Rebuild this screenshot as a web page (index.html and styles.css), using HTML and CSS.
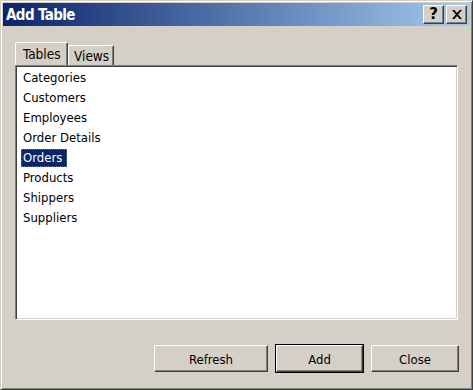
FILE: index.html
```html
<!DOCTYPE html>
<html>
<head>
<meta charset="utf-8">
<link rel="stylesheet" href="styles.css">
</head>
<body>
<div class="window">
  <div class="titlebar">
    <span class="title">Add Table</span>
    <div class="caption-btns">
      <div class="cap help">?</div>
      <div class="cap close">
        <svg width="10" height="9" viewBox="0 0 10 9"><path d="M0 0h2.4l2.6 2.9L7.6 0H10L6.2 4.5 10 9H7.6L5 6.1 2.4 9H0l3.8-4.5z" fill="#000"/></svg>
      </div>
    </div>
  </div>
  <div class="body">
    <div class="tabs">
      <div class="tab active">Tables</div>
      <div class="tab">Views</div>
    </div>
    <div class="listbox">
      <ul class="items">
        <li><span class="item">Categories</span></li>
        <li><span class="item">Customers</span></li>
        <li><span class="item">Employees</span></li>
        <li><span class="item">Order Details</span></li>
        <li><span class="item selected">Orders</span></li>
        <li><span class="item">Products</span></li>
        <li><span class="item">Shippers</span></li>
        <li><span class="item">Suppliers</span></li>
      </ul>
    </div>
    <div class="buttons">
      <div class="btn btn-refresh"><span>Refresh</span></div>
      <div class="btn btn-default btn-add"><span>Add</span></div>
      <div class="btn btn-close"><span>Close</span></div>
    </div>
  </div>
</div>
</body>
</html>
```
FILE: styles.css
```css
* { box-sizing: border-box; }
html, body { margin: 0; padding: 0; background: #d4d0c8; }
body {
  font-family: "DejaVu Sans Condensed", "Liberation Sans", sans-serif;
  font-size: 13px;
  color: #000;
}
.window {
  width: 473px;
  height: 390px;
  background: #d4d0c8;
  border: 1px solid;
  border-color: #d4d0c8 #404040 #404040 #d4d0c8;
  box-shadow: inset 1px 1px 0 #ffffff, inset -1px -1px 0 #808080;
  padding: 2px;
  display: flex;
  flex-direction: column;
}
.titlebar {
  height: 23px;
  flex: none;
  background: linear-gradient(to right, #0a246a, #a6caf0);
  display: flex;
  align-items: center;
  justify-content: space-between;
  padding: 0 3px 0 3px;
}
.title {
  color: #fff;
  font-weight: bold;
  font-size: 15px;
  font-family: "DejaVu Sans Condensed", "Liberation Sans", sans-serif;
  letter-spacing: -0.6px;
}
.caption-btns {
  display: flex;
  gap: 2px;
}
.cap {
  width: 21px;
  height: 19px;
  background: #d4d0c8;
  border: 1px solid;
  border-color: #ffffff #404040 #404040 #ffffff;
  box-shadow: inset -1px -1px 0 #808080;
  display: flex;
  align-items: center;
  justify-content: center;
}
.help {
  font-family: "DejaVu Sans", sans-serif;
  font-weight: bold;
  font-size: 15px;
  line-height: 1;
  padding-bottom: 1px;
}
.body {
  flex: 1;
  display: flex;
  flex-direction: column;
  padding: 16px 12px 15px 12px;
}
.tabs {
  display: flex;
  align-items: flex-end;
  height: 23px;
  flex: none;
}
.tab {
  height: 20px;
  width: 46px;
  padding: 1px 0 0 5px;
  border: 1px solid;
  border-bottom: none;
  border-color: #ffffff #404040 transparent #ffffff;
  box-shadow: inset -1px 0 0 #808080;
  border-radius: 2px 2px 0 0;
  line-height: 18px;
  font-size: 13.5px;
}
.tab.active {
  height: 23px;
  width: 53px;
  padding: 2px 0 0 7px;
  line-height: 19px;
}
.listbox {
  height: 255px;
  flex: none;
  background: #ffffff;
  border: 1px solid;
  border-color: #808080 #ffffff #ffffff #808080;
  box-shadow: inset 1px 1px 0 #404040, inset -1px -1px 0 #d4d0c8;
  padding: 3px 2px 2px 5px;
}
.items {
  list-style: none;
  margin: 0;
  padding: 0;
  display: flex;
  flex-direction: column;
  gap: 2px;
}
.items li {
  height: 18px;
  display: flex;
}
.item {
  display: inline-block;
  height: 18px;
  line-height: 18px;
  padding: 0 5px 0 2px;
}
.item.selected {
  background: #0a246a;
  color: #ffffff;
  outline: 1px dotted rgba(255, 255, 255, 0.35);
  outline-offset: -1px;
}
.buttons {
  display: flex;
  justify-content: flex-end;
  gap: 8px;
  margin-top: 25px;
  margin-right: -1px;
}
.btn {
  height: 27px;
  background: #d4d0c8;
  border: 1px solid;
  border-color: #ffffff #404040 #404040 #ffffff;
  box-shadow: inset -1px -1px 0 #808080;
  display: flex;
  align-items: center;
  justify-content: center;
  padding-top: 1px;
}
.btn-refresh { width: 114px; }
.btn-add { width: 87px; }
.btn-close { width: 88px; }
.btn-default {
  outline: 1px solid #000;
  outline-offset: 0;
}
```
